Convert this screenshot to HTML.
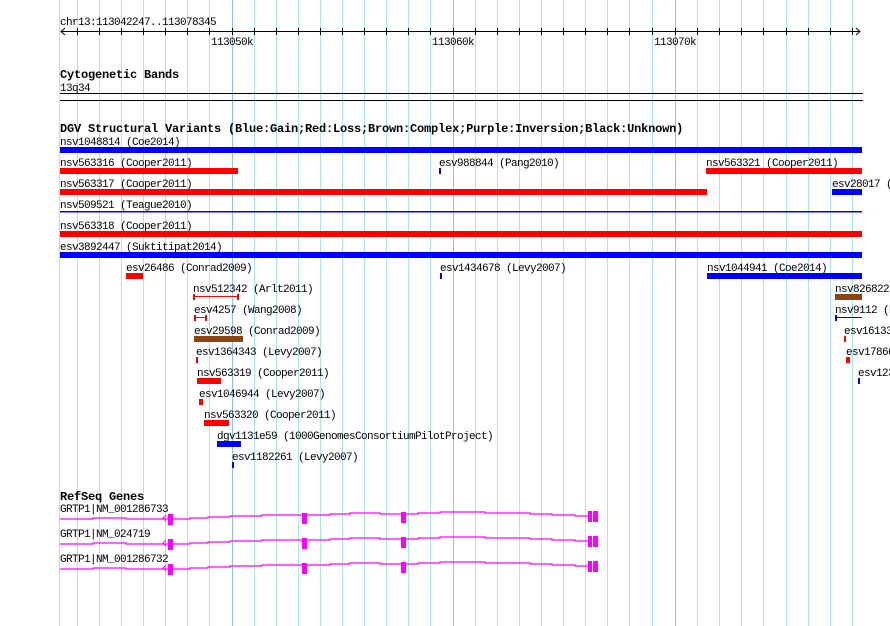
<!DOCTYPE html>
<html><head><meta charset="utf-8"><style>
html,body{margin:0;padding:0;background:#fff;overflow:hidden}
svg{display:block}
text{font-family:"Liberation Mono",monospace;font-size:11px;letter-spacing:-0.6px;fill:#000}
.b{font-weight:bold;font-size:12px;letter-spacing:-0.2px}
</style></head><body>
<svg width="890" height="626" viewBox="0 0 890 626" xmlns="http://www.w3.org/2000/svg">
<rect width="890" height="626" fill="#fff"/>
<g stroke="#a8e6ee" stroke-width="1">
<line x1="59.5" y1="0" x2="59.5" y2="626"/>
<line x1="77.5" y1="0" x2="77.5" y2="626"/><line x1="99.5" y1="0" x2="99.5" y2="626"/><line x1="121.5" y1="0" x2="121.5" y2="626"/><line x1="143.5" y1="0" x2="143.5" y2="626"/><line x1="165.5" y1="0" x2="165.5" y2="626"/><line x1="187.5" y1="0" x2="187.5" y2="626"/><line x1="209.5" y1="0" x2="209.5" y2="626"/>
<line x1="254.5" y1="0" x2="254.5" y2="626"/><line x1="276.5" y1="0" x2="276.5" y2="626"/><line x1="298.5" y1="0" x2="298.5" y2="626"/><line x1="320.5" y1="0" x2="320.5" y2="626"/><line x1="342.5" y1="0" x2="342.5" y2="626"/><line x1="364.5" y1="0" x2="364.5" y2="626"/><line x1="386.5" y1="0" x2="386.5" y2="626"/><line x1="408.5" y1="0" x2="408.5" y2="626"/><line x1="430.5" y1="0" x2="430.5" y2="626"/>
<line x1="475.5" y1="0" x2="475.5" y2="626"/><line x1="497.5" y1="0" x2="497.5" y2="626"/><line x1="519.5" y1="0" x2="519.5" y2="626"/><line x1="541.5" y1="0" x2="541.5" y2="626"/><line x1="563.5" y1="0" x2="563.5" y2="626"/><line x1="585.5" y1="0" x2="585.5" y2="626"/><line x1="607.5" y1="0" x2="607.5" y2="626"/><line x1="629.5" y1="0" x2="629.5" y2="626"/><line x1="652.5" y1="0" x2="652.5" y2="626"/>
<line x1="697.5" y1="0" x2="697.5" y2="626"/><line x1="719.5" y1="0" x2="719.5" y2="626"/><line x1="741.5" y1="0" x2="741.5" y2="626"/><line x1="763.5" y1="0" x2="763.5" y2="626"/><line x1="786.5" y1="0" x2="786.5" y2="626"/><line x1="808.5" y1="0" x2="808.5" y2="626"/><line x1="830.5" y1="0" x2="830.5" y2="626"/><line x1="852.5" y1="0" x2="852.5" y2="626"/>
</g>
<g stroke="#8cc4e6" stroke-width="1">
<line x1="232.5" y1="0" x2="232.5" y2="626"/><line x1="453.5" y1="0" x2="453.5" y2="626"/><line x1="675.5" y1="0" x2="675.5" y2="626"/>
</g>
<text x="60" y="25">chr13:113042247..113078345</text>
<g stroke="#000" stroke-width="1" fill="none">
<line x1="61" y1="31.5" x2="860" y2="31.5"/>
<polyline points="65,28 61,31.5 65,35"/>
<polyline points="856,28 860,31.5 856,35"/>
<path d="M77.5 28v7M99.5 28v7M121.5 28v7M143.5 28v7M165.5 28v7M187.5 28v7M209.5 28v7M232.5 28v7M254.5 28v7M276.5 28v7M298.5 28v7M320.5 28v7M342.5 28v7M364.5 28v7M386.5 28v7M408.5 28v7M430.5 28v7M453.5 28v7M475.5 28v7M497.5 28v7M519.5 28v7M541.5 28v7M563.5 28v7M585.5 28v7M607.5 28v7M629.5 28v7M652.5 28v7M675.5 28v7M697.5 28v7M719.5 28v7M741.5 28v7M763.5 28v7M786.5 28v7M808.5 28v7M830.5 28v7M852.5 28v7"/>
</g>
<text x="211" y="45">113050k</text>
<text x="432" y="45">113060k</text>
<text x="654" y="45">113070k</text>
<text class="b" x="60" y="78">Cytogenetic Bands</text>
<text x="60" y="91">13q34</text>
<rect x="60" y="93" width="803" height="1" fill="#000"/>
<rect x="60" y="100" width="803" height="1" fill="#000"/>
<text class="b" x="60" y="132">DGV Structural Variants (Blue:Gain;Red:Loss;Brown:Complex;Purple:Inversion;Black:Unknown)</text>
<text x="60" y="145">nsv1048814 (Coe2014)</text>
<rect x="60" y="147" width="802" height="6" fill="#0000ff"/>
<text x="60" y="166">nsv563316 (Cooper2011)</text>
<rect x="60" y="168" width="178" height="6" fill="#ff0000"/>
<text x="439" y="166">esv988844 (Pang2010)</text>
<rect x="439" y="168" width="2" height="6" fill="#0000ff"/>
<text x="706" y="166">nsv563321 (Cooper2011)</text>
<rect x="706" y="168" width="156" height="6" fill="#ff0000"/>
<text x="60" y="187">nsv563317 (Cooper2011)</text>
<rect x="60" y="189" width="647" height="6" fill="#ff0000"/>
<text x="832" y="187">esv28017 (Conrad2009)</text>
<rect x="832" y="189" width="30" height="6" fill="#0000ff"/>
<text x="60" y="208">nsv509521 (Teague2010)</text>
<rect x="60" y="211" width="802" height="1.5" fill="#0000ff"/>
<text x="60" y="229">nsv563318 (Cooper2011)</text>
<rect x="60" y="231" width="802" height="6" fill="#ff0000"/>
<text x="60" y="250">esv3892447 (Suktitipat2014)</text>
<rect x="60" y="252" width="802" height="6" fill="#0000ff"/>
<text x="126" y="271">esv26486 (Conrad2009)</text>
<rect x="126" y="273" width="17" height="6" fill="#ff0000"/>
<text x="440" y="271">esv1434678 (Levy2007)</text>
<rect x="440" y="273" width="2" height="6" fill="#0000ff"/>
<text x="707" y="271">nsv1044941 (Coe2014)</text>
<rect x="707" y="273" width="155" height="6" fill="#0000ff"/>
<text x="193" y="292">nsv512342 (Arlt2011)</text>
<g fill="#ff0000"><rect x="194" y="296" width="44" height="1"/><rect x="193" y="294" width="2" height="6"/><rect x="237" y="294" width="2" height="6"/></g>
<text x="835" y="292">nsv826822 (Itsara2009)</text>
<rect x="835" y="294" width="27" height="6" fill="#8b4513"/>
<text x="194" y="313">esv4257 (Wang2008)</text>
<g fill="#ff0000"><rect x="194" y="317" width="12" height="1"/><rect x="194" y="315" width="2" height="6"/><rect x="205" y="315" width="2" height="6"/></g>
<text x="835" y="313">nsv9112 (Perry2008)</text>
<g fill="#0000ff"><rect x="835" y="317" width="27" height="1"/><rect x="835" y="315" width="2" height="6"/></g>
<text x="194" y="334">esv29598 (Conrad2009)</text>
<rect x="194" y="336" width="49" height="6" fill="#8b4513"/>
<text x="844" y="334">esv1613321 (Levy2007)</text>
<rect x="844" y="336" width="2" height="6" fill="#ff0000"/>
<text x="196" y="355">esv1364343 (Levy2007)</text>
<rect x="196" y="357" width="2" height="6" fill="#ff0000"/>
<text x="846" y="355">esv1786611 (Levy2007)</text>
<rect x="846" y="357" width="4" height="6" fill="#ff0000"/>
<text x="197" y="376">nsv563319 (Cooper2011)</text>
<rect x="197" y="378" width="24" height="6" fill="#ff0000"/>
<text x="858" y="376">esv1234567 (Levy2007)</text>
<rect x="858" y="378" width="2" height="6" fill="#0000ff"/>
<text x="199" y="397">esv1046944 (Levy2007)</text>
<rect x="199" y="399" width="4" height="6" fill="#ff0000"/>
<text x="204" y="418">nsv563320 (Cooper2011)</text>
<rect x="204" y="420" width="25" height="6" fill="#ff0000"/>
<text x="217" y="439">dgv1131e59 (1000GenomesConsortiumPilotProject)</text>
<rect x="217" y="441" width="24" height="6" fill="#0000ff"/>
<text x="232" y="460">esv1182261 (Levy2007)</text>
<rect x="232" y="462" width="2" height="6" fill="#0000ff"/>
<text class="b" x="60" y="500">RefSeq Genes</text>
<g>
<text x="60" y="512">GRTP1|NM_001286733</text>
<polyline fill="none" stroke="#ff00ff" stroke-width="1.2" points="60,519 93,519 93,518 126,518 126,519 168,519 173,519 190,519 190,518 208,518 208,517 230,517 230,516 262,516 262,515 303,515 308,515 330,515 330,514 350,514 350,513 380,513 380,514 402,514 407,514 418,514 418,513 440,513 440,512 485,512 485,513 530,513 530,514 552,514 552,515 575,515 575,516 589,516"/>
<polyline fill="none" stroke="#ff00ff" stroke-width="1" points="166,515 163,518 166,521"/>
<g fill="#ff00ff"><rect x="168" y="514" width="5" height="11"/><rect x="302" y="513" width="5" height="11"/><rect x="401" y="512" width="5" height="11"/><rect x="588" y="511" width="4" height="11"/><rect x="593" y="511" width="5" height="11"/></g>
</g>
<g transform="translate(0,25)">
<text x="60" y="512">GRTP1|NM_024719</text>
<polyline fill="none" stroke="#ff00ff" stroke-width="1.2" points="60,519 93,519 93,518 126,518 126,519 168,519 173,519 190,519 190,518 208,518 208,517 230,517 230,516 262,516 262,515 303,515 308,515 330,515 330,514 350,514 350,513 380,513 380,514 402,514 407,514 418,514 418,513 440,513 440,512 485,512 485,513 530,513 530,514 552,514 552,515 575,515 575,516 589,516"/>
<polyline fill="none" stroke="#ff00ff" stroke-width="1" points="166,515 163,518 166,521"/>
<g fill="#ff00ff"><rect x="168" y="514" width="5" height="11"/><rect x="302" y="513" width="5" height="11"/><rect x="401" y="512" width="5" height="11"/><rect x="588" y="511" width="4" height="11"/><rect x="593" y="511" width="5" height="11"/></g>
</g>
<g transform="translate(0,50)">
<text x="60" y="512">GRTP1|NM_001286732</text>
<polyline fill="none" stroke="#ff00ff" stroke-width="1.2" points="60,519 93,519 93,518 126,518 126,519 168,519 173,519 190,519 190,518 208,518 208,517 230,517 230,516 262,516 262,515 303,515 308,515 330,515 330,514 350,514 350,513 380,513 380,514 402,514 407,514 418,514 418,513 440,513 440,512 485,512 485,513 530,513 530,514 552,514 552,515 575,515 575,516 589,516"/>
<polyline fill="none" stroke="#ff00ff" stroke-width="1" points="166,515 163,518 166,521"/>
<g fill="#ff00ff"><rect x="168" y="514" width="5" height="11"/><rect x="302" y="513" width="5" height="11"/><rect x="401" y="512" width="5" height="11"/><rect x="588" y="511" width="4" height="11"/><rect x="593" y="511" width="5" height="11"/></g>
</g>
</svg>
</body></html>
